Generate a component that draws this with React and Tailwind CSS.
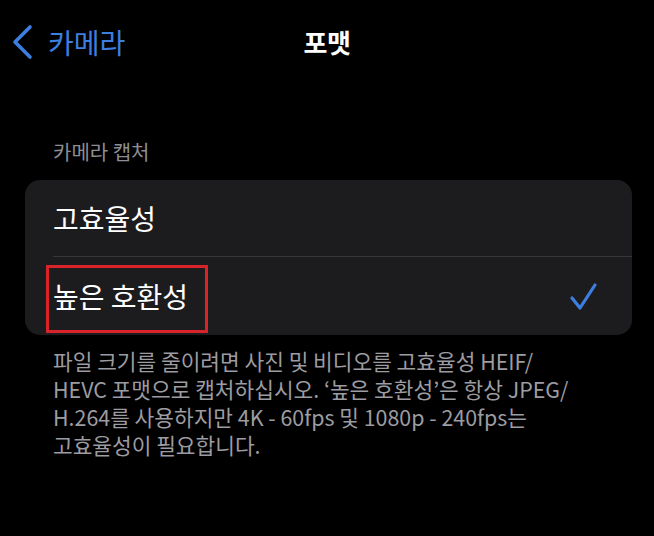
import React from "react";

const font = { fontFamily: '"Noto Sans CJK KR", "Noto Sans", sans-serif' };

export default function App() {
  return (
    <div
      className="w-[654px] h-[536px] bg-black text-white overflow-hidden"
      style={font}
    >
      {/* Nav bar */}
      <div className="grid grid-cols-[1fr_auto_1fr] items-center h-[84px]">
        <div className="flex items-center pl-[12px] gap-[14px]">
          <svg width="22" height="36" viewBox="0 0 22 36" className="shrink-0">
            <polyline
              points="18,3 3,18 18,33"
              fill="none"
              stroke="#3d7fe0"
              strokeWidth="3.6"
              strokeLinecap="round"
              strokeLinejoin="round"
            />
          </svg>
          <span className="text-[28px] leading-[34px] text-[#3d7fe0]">카메라</span>
        </div>
        <div className="text-[26px] leading-[34px] font-bold tracking-[-0.5px]">포맷</div>
        <div />
      </div>

      {/* Section header */}
      <div className="pl-[53px] mt-[54px] text-[20px] leading-[28px] text-[#8e8e93]">
        카메라 캡처
      </div>

      {/* Card */}
      <div className="relative ml-[25px] mr-[22px] mt-[14px] rounded-[15px] bg-[#1c1c1e]">
        <div className="h-[76px] flex items-center pl-[28px] text-[28px]">
          고효율성
        </div>
        <div className="ml-[28px] h-px bg-[#38383a]" />
        <div className="h-[78px] flex items-center justify-between pl-[28px] pr-[34px] text-[28px]">
          <span>높은 호환성</span>
          <svg width="30" height="30" viewBox="0 0 30 30">
            <polyline
              points="4,17 12,27 27,4"
              fill="none"
              stroke="#3d7fe0"
              strokeWidth="3.2"
              strokeLinecap="round"
              strokeLinejoin="round"
            />
          </svg>
        </div>
        <div className="absolute left-[21px] top-[85px] w-[162px] h-[68px] border-[3px] border-[#d8232a]" />
      </div>

      {/* Footer */}
      <div className="pl-[53px] mt-[12px] text-[21.4px] leading-[28px] text-[#9c9ca1] whitespace-nowrap">
        <div>파일 크기를 줄이려면 사진 및 비디오를 고효율성 HEIF/</div>
        <div>HEVC 포맷으로 캡처하십시오. ‘높은 호환성’은 항상 JPEG/</div>
        <div>H.264를 사용하지만 4K - 60fps 및 1080p - 240fps는</div>
        <div>고효율성이 필요합니다.</div>
      </div>
    </div>
  );
}
